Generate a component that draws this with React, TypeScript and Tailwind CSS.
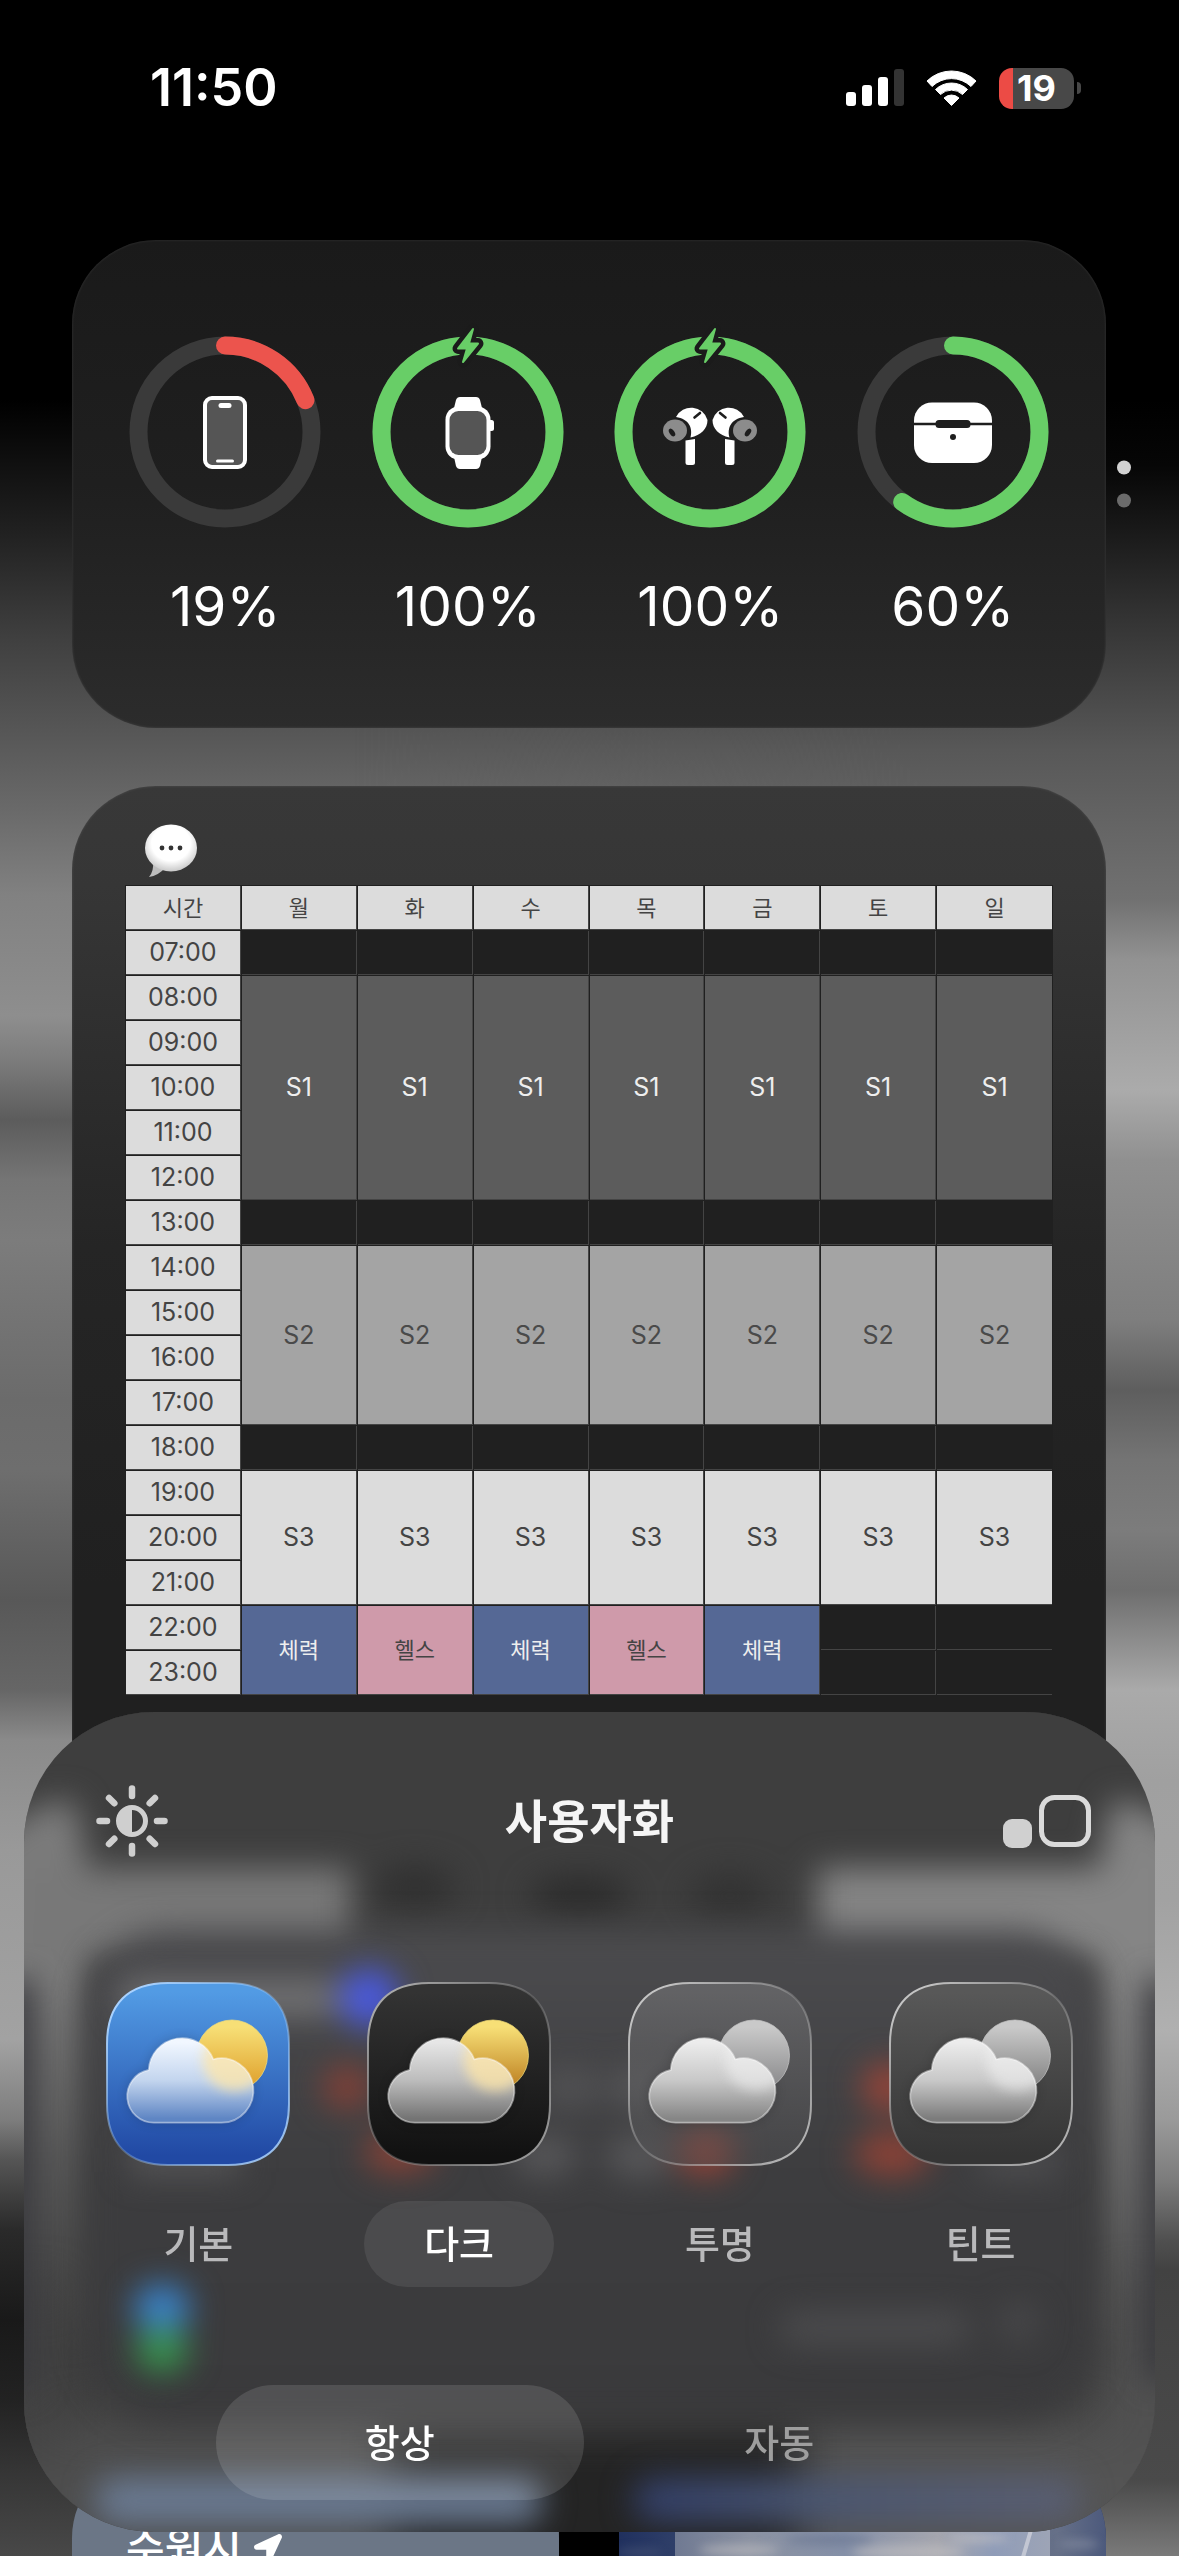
import type { ReactNode } from "react";
import { FaLocationArrow } from "react-icons/fa";

type Device = {
  name: string;
  level: number;
  color: string;
  charging?: boolean;
  glyph: ReactNode;
};

type Theme = {
  id: string;
  label: string;
  bg: [string, string];
  rim: string;
  cloud: [string, string, string];
  sun: [string, string];
  glow: string;
  selected?: boolean;
};

const GREEN = "#68ce67";
const RED = "#ec544d";

const Bud = () => (
  <g>
    <path d="M62 81 A17 17 0 0 1 93.5 84 C93.5 93 87 99 76.5 101.5 C79 92 75 83 62 81 Z" fill="#fff" />
    <path d="M71.500 104.5 L81 103 V126.5 Q81 129 78.5 129 H74 Q71.5 129 71.5 126.5 V104.5 Z" fill="#fff" />
    <path d="M80.5 81.5 L86 77" stroke="#1d1d1d" strokeWidth="2.6" strokeLinecap="round" />
    <ellipse cx="61" cy="94.5" rx="12" ry="11" fill="#8c8c8c" />
    <ellipse cx="58" cy="96.5" rx="2.4" ry="4.4" transform="rotate(-35 58 96.5)" fill="#1d1d1d" />
  </g>
);

const devices: Device[] = [
  {
    name: "iPhone",
    level: 19,
    color: RED,
    glyph: (
      <>
        <rect x="76" y="62" width="40" height="69" rx="7" fill="#555" stroke="#fff" strokeWidth="4" />
        <rect x="89.5" y="67" width="13" height="5" rx="2.5" fill="#fff" />
        <rect x="87" y="123.5" width="18" height="3" rx="1.5" fill="#fff" />
      </>
    ),
  },
  {
    name: "Apple Watch",
    level: 100,
    color: GREEN,
    charging: true,
    glyph: (
      <>
        <path d="M88 61 H104 Q107 61 108 64 L110 72 H82 L84 64 Q85 61 88 61 Z" fill="#fff" />
        <path d="M88 133 H104 Q107 133 108 130 L110 121 H82 L84 130 Q85 133 88 133 Z" fill="#fff" />
        <rect x="73.500" y="70.500" width="45" height="53" rx="13" fill="#fff" />
        <rect x="116" y="84" width="6" height="11" rx="2.5" fill="#fff" />
        <rect x="77.500" y="75" width="37" height="44" rx="9" fill="#555" />
      </>
    ),
  },
  {
    name: "AirPods",
    level: 100,
    color: GREEN,
    charging: true,
    glyph: (
      <>
        <Bud />
        <g transform="translate(192 0) scale(-1 1)">
          <Bud />
        </g>
      </>
    ),
  },
  {
    name: "AirPods Case",
    level: 60,
    color: GREEN,
    glyph: (
      <>
        <rect x="57" y="66.500" width="78" height="60.500" rx="18" fill="#fff" />
        <path d="M57 88 H135" stroke="#1e1e1e" strokeWidth="2.6" />
        <rect x="78.500" y="84" width="35" height="8" rx="3.5" fill="#1e1e1e" />
        <circle cx="96" cy="101" r="3" fill="#1e1e1e" />
      </>
    ),
  },
];

const days = ["월", "화", "수", "목", "금", "토", "일"];
const hours = Array.from({ length: 17 }, (_, i) => i + 7);

const blocks: Record<number, { label: string; span: number; style: string }> = {
  8: { label: "S1", span: 5, style: "bg-[#5c5c5c] text-[#eeeeee]" },
  14: { label: "S2", span: 4, style: "bg-[#a4a4a4] text-[#4a4a4a]" },
  19: { label: "S3", span: 3, style: "bg-[#dcdcdc] text-[#444444]" },
};

const evenings = ["체력", "헬스", "체력", "헬스", "체력"];

const themes: Theme[] = [
  {
    id: "light",
    label: "기본",
    bg: ["#529be4", "#2149a4"],
    rim: "#a9d2ff",
    cloud: ["#f1f7ff", "#c3d5ee", "#5f86c4"],
    sun: ["#f7df76", "#dd9c27"],
    glow: "#ffe6a6",
  },
  {
    id: "dark",
    label: "다크",
    bg: ["#333333", "#111111"],
    rim: "#a8a8a8",
    cloud: ["#e6e6e6", "#bcbcbc", "#747474"],
    sun: ["#f7df76", "#b97a1c"],
    glow: "#ffe6a6",
    selected: true,
  },
  {
    id: "clear",
    label: "투명",
    bg: ["rgba(112,112,114,0.65)", "rgba(80,80,82,0.45)"],
    rim: "#c4c4c4",
    cloud: ["#ececec", "#c8c8c8", "#868686"],
    sun: ["#c9c9c9", "#858587"],
    glow: "rgba(244,244,244,0.7)",
  },
  {
    id: "tinted",
    label: "틴트",
    bg: ["#585858", "#353535"],
    rim: "#c4c4c4",
    cloud: ["#ececec", "#c8c8c8", "#7c7c7c"],
    sun: ["#c9c9c9", "#7d7d7d"],
    glow: "rgba(244,244,244,0.7)",
  },
];

const StatusBar = () => (
  <header className="mb-16 flex h-44 items-center justify-between pr-[25px] pl-[78px]">
    <time className="text-[52px] leading-none font-semibold">11:50</time>
    <div className="flex items-center gap-[22px]">
      <svg viewBox="0 0 58 38" className="h-[38px] w-[58px]" aria-label="신호">
        <rect x="0" y="23" width="10" height="14" rx="3" fill="#fff" />
        <rect x="16" y="16" width="10" height="21" rx="3" fill="#fff" />
        <rect x="32" y="8" width="10" height="29" rx="3" fill="#fff" />
        <rect x="48" y="0" width="10" height="37" rx="3" fill="#333" />
      </svg>
      <svg viewBox="0 0 51 38" className="h-[38px] w-[51px]" aria-label="Wi-Fi">
        <path d="M1 12 A35 35 0 0 1 50 12 L45 17.500 A28 28 0 0 0 6 17.500 Z" fill="#fff" stroke="#fff" strokeLinejoin="round" />
        <path d="M9.500 20.500 A23 23 0 0 1 41.500 20.500 L36.500 25.500 A16 16 0 0 0 14.500 25.500 Z" fill="#fff" stroke="#fff" strokeLinejoin="round" />
        <path d="M18 29 A11 11 0 0 1 33 29 L25.500 36.500 Z" fill="#fff" stroke="#fff" strokeLinejoin="round" />
      </svg>
      <div className="flex items-center gap-[3px]">
        <div className="flex h-[41px] w-[75px] items-center justify-center rounded-[13px] bg-[linear-gradient(90deg,#ec4b45_14px,#484848_14px)] text-[36px] leading-none font-bold">
          19
        </div>
        <div className="h-3 w-1 rounded-r-full bg-[#484848]" />
      </div>
    </div>
  </header>
);

const BatteryRing = ({ device }: { device: Device }) => (
  <li className="flex flex-col items-center">
    <svg viewBox="0 0 192 192" className="size-48 overflow-visible" aria-label={device.name}>
      <circle cx="96" cy="96" r="86.500" fill="none" stroke="#3a3a3a" strokeWidth="18" />
      <circle
        cx="96"
        cy="96"
        r="86.500"
        fill="none"
        stroke={device.color}
        strokeWidth="18"
        strokeLinecap="round"
        pathLength={100}
        strokeDasharray={`${device.level} 100`}
        transform="rotate(-90 96 96)"
      />
      {device.charging && (
        <>
          <path d="M101 -7 L86 12.500 H95 L91 26 L106 7.500 H97 Z" fill="#1b1b1b" stroke="#1b1b1b" strokeWidth="11" strokeLinejoin="round" />
          <path d="M101 -7 L86 12.500 H95 L91 26 L106 7.500 H97 Z" fill={GREEN} stroke={GREEN} strokeWidth="2" strokeLinejoin="round" />
        </>
      )}
      {device.glyph}
    </svg>
    <span className="mt-12 text-[55px] leading-[60px]">{device.level}%</span>
  </li>
);

const BatteryWidget = () => (
  <section className="relative rounded-[84px] bg-linear-to-b from-[#1a1a1a] via-[#1f1f1f] to-[#2c2c2c] px-8 pt-24 pb-[92px] shadow-[inset_0_0_3px_rgba(255,255,255,0.12)]">
    <ul className="grid grid-cols-4">
      {devices.map((d) => (
        <BatteryRing key={d.name} device={d} />
      ))}
    </ul>
    {/* Stack page dots */}
    <div className="absolute top-1/2 -right-[25px] flex -translate-y-1/2 flex-col gap-[19px]">
      <span className="size-3.5 rounded-full bg-[#d2d2d2]" />
      <span className="size-3.5 rounded-full bg-[#6b6b6b]" />
    </div>
  </section>
);

const SpeechBubble = () => (
  <svg viewBox="0 0 56 56" className="mb-[7px] ml-5 size-14" aria-hidden="true">
    <defs>
      <radialGradient id="bubble" cx="0.5" cy="0.4" r="0.62">
        <stop offset="0.6" stopColor="#fff" />
        <stop offset="1" stopColor="#c4c4c4" />
      </radialGradient>
    </defs>
    <path d="M8 40 Q9 49 4 55 Q13 54 21 45 Z" fill="#bdbdbd" />
    <ellipse cx="26" cy="26" rx="26" ry="23.500" fill="url(#bubble)" />
    <circle cx="17" cy="26" r="2.400" fill="#333" />
    <circle cx="26" cy="26" r="2.400" fill="#333" />
    <circle cx="35" cy="26" r="2.400" fill="#333" />
  </svg>
);

const Timetable = () => (
  <section className="mt-[58px] rounded-[84px] bg-[linear-gradient(#383838,#363636_100px,#252525_460px,#202020_800px)] px-[53px] pt-9 pb-32 shadow-[inset_0_0_3px_rgba(255,255,255,0.12)]">
    <SpeechBubble />
    <table className="w-full table-fixed border-separate border-spacing-[1px] bg-[#202020] text-center leading-none">
      <thead>
        <tr className="h-11">
          <th className="border-r border-b border-[#444444] bg-[#dcdcdc] text-[22px] font-normal text-[#444444]">시간</th>
          {days.map((d) => (
            <th key={d} className="border-r border-b border-[#444444] bg-[#dcdcdc] text-[22px] font-normal text-[#444444] last:border-r-0">
              {d}
            </th>
          ))}
        </tr>
      </thead>
      <tbody>
        {hours.map((h) => {
          const block = blocks[h];
          const empty = h === 7 || h === 13 || h === 18;
          return (
            <tr key={h} className="h-11">
              <th className="border-r border-b border-[#444444] bg-[#dcdcdc] p-0 text-[25px] font-normal text-[#444444]">
                {String(h).padStart(2, "0")}:00
              </th>
              {block &&
                days.map((d) => (
                  <td
                    key={d}
                    rowSpan={block.span}
                    className={`border-r border-b border-[#444444] p-0 text-[25px] last:border-r-0 ${block.style}`}
                  >
                    {block.label}
                  </td>
                ))}
              {empty && days.map((d) => <td key={d} className="border-r border-b border-[#444444] last:border-r-0" />)}
              {h === 22 &&
                evenings.map((label, i) => (
                  <td
                    key={i}
                    rowSpan={2}
                    className={`border-r border-b border-[#444444] p-0 text-[22px] ${
                      label === "체력" ? "bg-[#556895] text-[#eeeeee]" : "bg-[#cf9aaa] text-[#444444]"
                    }`}
                  >
                    {label}
                  </td>
                ))}
              {h >= 22 && (
                <>
                  <td className="border-r border-b border-[#444444]" />
                  <td className="border-b border-[#444444]" />
                </>
              )}
            </tr>
          );
        })}
      </tbody>
    </table>
  </section>
);

const WeatherRow = () => (
  <section className="mt-10 grid grid-cols-[1fr_60px_1fr]">
    <div className="h-[488px] rounded-[84px] bg-[#6b7686] px-[54px] pt-[70px]">
      <p className="flex items-center gap-3 text-[42px] leading-[48px] font-medium">
        수원시
        <FaLocationArrow className="size-7" />
      </p>
    </div>
    <div className="bg-black" />
    <div className="h-[488px] overflow-hidden rounded-[84px] bg-[#2c3c68]">
      <svg viewBox="0 0 487 488" className="h-full w-full" preserveAspectRatio="none" aria-hidden="true">
        <defs>
          <linearGradient id="sky" x1="0" x2="1">
            <stop offset="0" stopColor="#20305e" />
            <stop offset="0.110" stopColor="#2e3e68" />
            <stop offset="0.900" stopColor="#667088" />
            <stop offset="1" stopColor="#4c597c" />
          </linearGradient>
          <linearGradient id="haze" x1="0" x2="1">
            <stop offset="0" stopColor="#6f7992" />
            <stop offset="0.200" stopColor="#8b92a2" />
            <stop offset="0.450" stopColor="#8590a8" />
            <stop offset="0.700" stopColor="#a5a6ae" />
            <stop offset="0.850" stopColor="#8f9cb8" />
            <stop offset="1" stopColor="#9da4b6" />
          </linearGradient>
          <filter id="soft" x="-50%" y="-50%" width="200%" height="200%" colorInterpolationFilters="sRGB">
            <feGaussianBlur stdDeviation="5" />
          </filter>
        </defs>
        <rect width="487" height="488" fill="url(#sky)" />
        <rect x="56" width="375" height="488" fill="url(#haze)" />
        <g filter="url(#soft)" fill="#c3c1c3" opacity="0.6">
          <ellipse cx="120" cy="96" rx="40" ry="5" />
          <ellipse cx="210" cy="86" rx="44" ry="5" fill="#66738f" />
          <ellipse cx="290" cy="98" rx="56" ry="7" />
          <ellipse cx="360" cy="84" rx="30" ry="5" />
          <ellipse cx="460" cy="90" rx="20" ry="4" fill="#8f96a8" />
          <ellipse cx="20" cy="98" rx="24" ry="4" fill="#4a5778" />
        </g>
        <path d="M412 76 L402 110" stroke="#dfe0e6" strokeWidth="4" opacity="0.6" />
      </svg>
    </div>
  </section>
);

const ThemeIcon = ({ theme }: { theme: Theme }) => {
  const { id, bg, rim, cloud, sun, glow } = theme;
  const cloudPath =
    "M48 140.700 A26.600 26.600 0 0 1 42.700 88 A33.500 33.500 0 0 1 107.300 77.300 A32.200 32.200 0 1 1 115.300 140.700 Z";
  return (
    <svg viewBox="0 0 184 184" className="size-46 overflow-visible" aria-hidden="true">
      <defs>
        <linearGradient id={`${id}-bg`} x2="0" y2="1">
          <stop offset="0.050" stopColor={bg[0]} />
          <stop offset="0.950" stopColor={bg[1]} />
        </linearGradient>
        <linearGradient id={`${id}-rim`} x2="1" y2="1">
          <stop offset="0.100" stopColor={rim} />
          <stop offset="0.500" stopColor={rim} stopOpacity="0.250" />
          <stop offset="0.900" stopColor={rim} stopOpacity="0.850" />
        </linearGradient>
        <linearGradient id={`${id}-cloud`} x2="0" y2="1">
          <stop offset="0.050" stopColor={cloud[0]} />
          <stop offset="0.500" stopColor={cloud[1]} />
          <stop offset="0.950" stopColor={cloud[2]} />
        </linearGradient>
        <linearGradient id={`${id}-sun`} x2="0" y2="1">
          <stop offset="0.100" stopColor={sun[0]} />
          <stop offset="1" stopColor={sun[1]} />
        </linearGradient>
        <clipPath id={`${id}-clip`}>
          <path d={cloudPath} />
        </clipPath>
        <filter id={`${id}-blur`} x="-50%" y="-50%" width="200%" height="200%" colorInterpolationFilters="sRGB">
          <feGaussianBlur stdDeviation="6" />
        </filter>
      </defs>
      <path
        d="M62 1 H122 C162 1 183 22 183 62 V122 C183 162 162 183 122 183 H62 C22 183 1 162 1 122 V62 C1 22 22 1 62 1 Z"
        fill={`url(#${id}-bg)`}
        stroke={`url(#${id}-rim)`}
        strokeWidth="2"
      />
      <path d={cloudPath} fill="#000" opacity="0.180" filter={`url(#${id}-blur)`} />
      <circle cx="126" cy="73.500" r="35.500" fill={`url(#${id}-sun)`} stroke={sun[0]} strokeOpacity="0.700" />
      <path d={cloudPath} fill={`url(#${id}-cloud)`} />
      <g clipPath={`url(#${id}-clip)`}>
        <circle cx="128" cy="78" r="31" fill={glow} opacity="0.750" filter={`url(#${id}-blur)`} />
      </g>
      <path d={cloudPath} fill="none" stroke="#fff" strokeOpacity="0.450" strokeWidth="1.800" />
    </svg>
  );
};

/* Everything behind the sheet, seen through the frosted glass */
const SheetGlass = () => (
  <svg
    viewBox="24 1712 1131 820"
    preserveAspectRatio="none"
    className="absolute inset-0 -z-10 h-full w-full"
    aria-hidden="true"
  >
    <defs>
      <filter id="g16" x="-30%" y="-30%" width="160%" height="160%" colorInterpolationFilters="sRGB">
        <feGaussianBlur stdDeviation="16" />
      </filter>
      <filter id="g24" x="-30%" y="-30%" width="160%" height="160%" colorInterpolationFilters="sRGB">
        <feGaussianBlur stdDeviation="24" />
      </filter>
      <linearGradient id="left-band" x2="0" y2="1">
        <stop offset="0" stopColor="#7c7c7c" />
        <stop offset="0.350" stopColor="#7a7a7a" />
        <stop offset="0.700" stopColor="#565656" />
        <stop offset="1" stopColor="#424242" />
      </linearGradient>
      <linearGradient id="right-band" x2="0" y2="1">
        <stop offset="0" stopColor="#848484" />
        <stop offset="0.350" stopColor="#848484" />
        <stop offset="0.700" stopColor="#6a6a6a" />
        <stop offset="1" stopColor="#4e4e4e" />
      </linearGradient>
      <linearGradient id="under-card" x2="0" y2="1">
        <stop offset="0" stopColor="#4c4c4f" />
        <stop offset="0.500" stopColor="#3d3d3f" />
        <stop offset="1" stopColor="#3a3a3c" />
      </linearGradient>
      <linearGradient id="photo" x2="1">
        <stop offset="0" stopColor="#323f6a" />
        <stop offset="0.400" stopColor="#4a5672" />
        <stop offset="1" stopColor="#5a5f73" />
      </linearGradient>
    </defs>
    <rect x="24" y="1712" width="1131" height="820" fill="#3e3e3e" />
    <g filter="url(#g16)">
      <path d="M-40 1860 Q40 1800 66 1800 Q84 1800 88 1900 V2330 H-40 Z" fill="url(#left-band)" />
      <path d="M1220 1860 Q1140 1800 1120 1800 Q1104 1800 1098 1900 V2330 H1220 Z" fill="url(#right-band)" />
      <rect x="20" y="1868" width="330" height="90" fill="#787878" />
      <rect x="818" y="1868" width="330" height="90" fill="#858585" />
      <ellipse cx="415" cy="1888" rx="40" ry="22" fill="#303030" />
      <ellipse cx="580" cy="1896" rx="50" ry="20" fill="#2c2c2c" />
      <ellipse cx="730" cy="1896" rx="40" ry="22" fill="#323232" />
    </g>
    <g filter="url(#g24)">
      <rect x="-40" y="2420" width="430" height="170" fill="#4e4e4e" />
      <rect x="390" y="2430" width="410" height="160" fill="#242424" />
      <rect x="800" y="2420" width="400" height="170" fill="#545454" />
      <rect x="-40" y="2290" width="100" height="170" fill="#434343" />
      <rect x="1100" y="2290" width="100" height="170" fill="#515151" />
    </g>
    <rect x="86" y="1930" width="1012" height="490" rx="84" fill="url(#under-card)" filter="url(#g16)" />
    <g filter="url(#g16)">
      <rect x="0" y="1980" width="34" height="410" fill="#39393d" />
      <rect x="1145" y="1980" width="34" height="400" fill="#37373b" />
      <rect x="120" y="1980" width="220" height="36" rx="16" fill="#727274" />
      <circle cx="369" cy="1998" r="30" fill="#4a5ade" />
      <ellipse cx="347" cy="2087" rx="24" ry="22" fill="#844036" />
      <ellipse cx="400" cy="2152" rx="36" ry="20" fill="#8a4236" />
      <ellipse cx="706" cy="2152" rx="28" ry="24" fill="#984438" />
      <ellipse cx="888" cy="2087" rx="26" ry="24" fill="#984438" />
      <ellipse cx="892" cy="2154" rx="38" ry="22" fill="#8e4236" />
      <rect x="130" y="2146" width="110" height="28" fill="#58585a" />
      <ellipse cx="545" cy="2156" rx="32" ry="20" fill="#58585a" />
      <ellipse cx="570" cy="2087" rx="32" ry="20" fill="#525254" />
      <ellipse cx="640" cy="2156" rx="34" ry="22" fill="#58585a" />
      <ellipse cx="640" cy="2087" rx="30" ry="20" fill="#58585a" />
      <rect x="980" y="2154" width="80" height="20" fill="#545456" />
      <ellipse cx="162" cy="2308" rx="28" ry="24" fill="#3a84cc" />
      <ellipse cx="162" cy="2350" rx="26" ry="22" fill="#38964e" />
      <rect x="780" y="2312" width="190" height="32" rx="16" fill="#4c4c4e" />
      <circle cx="1018" cy="2322" r="20" fill="#48484a" />
      <rect x="96" y="2478" width="446" height="46" rx="20" fill="#6a7a92" />
      <rect x="634" y="2478" width="446" height="44" rx="20" fill="url(#photo)" />
    </g>
  </svg>
);

const BrightnessIcon = () => (
  <svg viewBox="-36 -36 72 72" className="size-18" aria-hidden="true">
    <circle r="13.500" fill="none" stroke="#cfcfcf" strokeWidth="5" />
    <path d="M0 -14 A14 14 0 0 0 0 14 Z" fill="#cfcfcf" />
    {[0, 45, 90, 135, 180, 225, 270, 315].map((a) => (
      <path key={a} d="M0 -25 V-32.500" transform={`rotate(${a})`} stroke="#cfcfcf" strokeWidth="6.500" strokeLinecap="round" />
    ))}
  </svg>
);

const SizeIcon = () => (
  <svg viewBox="0 0 88 54" className="h-[54px] w-22" aria-hidden="true">
    <rect x="0" y="25" width="29" height="29" rx="9" fill="#d0d0d0" />
    <rect x="38.500" y="3.500" width="47" height="47" rx="13" fill="none" stroke="#dadada" strokeWidth="5" />
  </svg>
);

const CustomizeSheet = () => (
  <section
    aria-label="사용자화"
    className="fixed inset-x-6 bottom-6 isolate overflow-hidden rounded-[130px] pt-[67px] pb-8 shadow-[inset_0_0_2px_rgba(255,255,255,0.25)]"
  >
    <SheetGlass />
    <div className="grid h-21 grid-cols-[1fr_auto_1fr] items-center px-16">
      <button type="button" aria-label="밝기" className="ml-2 justify-self-start">
        <BrightnessIcon />
      </button>
      <h1 className="text-[46px] leading-none font-bold text-[#f5f5f5]">사용자화</h1>
      <button type="button" aria-label="아이콘 크기" className="justify-self-end">
        <SizeIcon />
      </button>
    </div>

    <div className="mt-[119px] grid grid-cols-4 px-11">
      {themes.map((t) => (
        <button key={t.id} type="button" aria-pressed={!!t.selected} className="flex flex-col items-center gap-[35px]">
          <ThemeIcon theme={t} />
          <span
            className={`flex h-[86px] w-[190px] items-center justify-center rounded-full text-[38px] leading-none font-medium ${
              t.selected ? "bg-white/8 text-white" : "text-[#b9b9bb]"
            }`}
          >
            {t.label}
          </span>
        </button>
      ))}
    </div>

    <div className="mt-[98px] grid grid-cols-2 gap-3 px-48 text-[38px] leading-none font-medium">
      <button type="button" aria-pressed="true" className="h-[115px] rounded-full bg-white/12">
        항상
      </button>
      <button type="button" aria-pressed="false" className="h-[115px] rounded-full text-[#9e9e9e]">
        자동
      </button>
    </div>
  </section>
);

const App = () => (
  <main className="relative isolate h-screen overflow-hidden bg-black pr-[73px] pl-[72px] font-['Inter','Noto_Sans_CJK_KR',sans-serif] text-white">
    {/* Blurred wallpaper: one vertical fade per side, blended across the middle */}
    <div className="absolute inset-0 -z-10 bg-[linear-gradient(#000_400px,#222_537px,#404040_640px,#6a6a6a_812px,#818181_895px,#8e8e8e_1016px,#7c7c7c_1060px,#5c5c5c_1120px,#757575_1180px,#7c7c7c_1240px,#6b6b6b_1400px,#6e6e6e_1470px,#585858_1600px,#666_1690px,#8a8a8a_1740px,#999_1850px,#a2a2a2_2040px,#7d7d7d_2120px,#555_2160px,#2a2a2a_2230px,#191919_2320px,#222_2400px,#353535_2470px,#484848_2556px)]" />
    <div className="absolute inset-0 -z-10 bg-[linear-gradient(#000_400px,#060606_465px,#1c1c1c_540px,#343434_620px,#585858_750px,#717171_900px,#929292_960px,#ababab_1090px,#909090_1160px,#7e7e7e_1320px,#5e5e5e_1390px,#747474_1460px,#7c7c7c_1530px,#6e6e6e_1590px,#8c8c8c_1640px,#aaa_1690px,#a0a0a0_1780px,#a2a2a2_1900px,#b0b0b0_2030px,#9a9a9a_2120px,#7c7c7c_2180px,#505050_2240px,#424242_2270px,#4a4a4a_2480px,#7a7a7a_2556px)] [mask-image:linear-gradient(90deg,transparent_30%,#000_80%)]" />
    <StatusBar />
    <BatteryWidget />
    <Timetable />
    <section className="mt-[102px] h-[488px] rounded-[84px] bg-[#3a3a3c]" aria-label="캘린더" />
    <WeatherRow />
    <CustomizeSheet />
  </main>
);

export default App;
